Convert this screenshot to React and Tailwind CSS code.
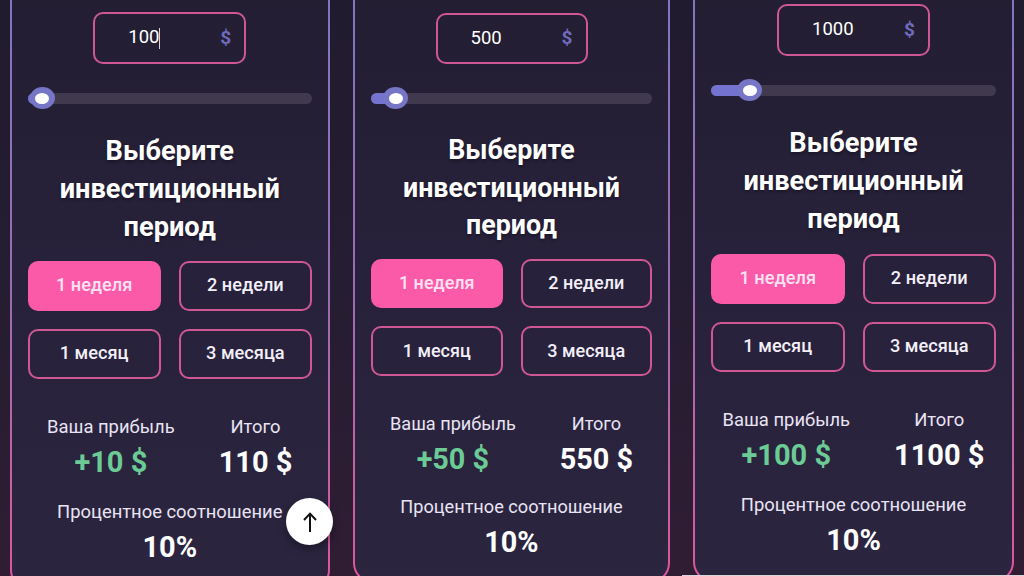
import React, { useState } from 'react';

const periods = ["1 неделя", "2 недели", "1 месяц", "3 месяца"];

const screens = [
  {
    id: 1,
    amount: "100",
    profit: "+10 $",
    total: "110 $",
    percent: "10%",
    focused: true,
    scrollTop: true,
    column: "w-[342px] pl-[10px] pr-[12px]",
    card: "h-[588px] pt-[12px] pl-[15.5px] pr-[16px]",
    field: "w-[153px] h-[52px]",
    slider: "mt-[23px]",
    fill: "w-[15px]",
    thumb: "left-[2px]",
    title: "mt-[23px] text-[27.2px] leading-[38px]",
    grid: "mt-[15px] gap-[18px] auto-rows-[50px]",
    button: "text-[18.2px]",
    stats: "mt-[36px]",
    label: "text-[18.4px]",
    value: "text-[29px]",
    ratio: "mt-[21px]",
  },
  {
    id: 2,
    amount: "500",
    profit: "+50 $",
    total: "550 $",
    percent: "10%",
    column: "w-[341px] pl-[11px] pr-[13px]",
    card: "h-[581px] pt-[13px] px-[16px]",
    field: "w-[152px] h-[51px]",
    slider: "mt-[23px]",
    fill: "w-[25px]",
    thumb: "left-[12px]",
    title: "mt-[23px] text-[26.8px] leading-[37.6px]",
    grid: "mt-[14px] gap-[18px] auto-rows-[49.5px]",
    button: "text-[18px]",
    stats: "mt-[36px]",
    label: "text-[18.15px]",
    value: "text-[28.8px]",
    ratio: "mt-[19px]",
  },
  {
    id: 3,
    amount: "1000",
    profit: "+100 $",
    total: "1100 $",
    percent: "10%",
    column: "w-[341px] pl-[10px] pr-[10px]",
    card: "h-[580px] pt-[4px] px-[16px]",
    field: "w-[153px] h-[52px]",
    slider: "mt-[23px]",
    fill: "w-[39px]",
    thumb: "left-[26px]",
    title: "mt-[23px] text-[27.2px] leading-[38px]",
    grid: "mt-[16px] gap-[18px] auto-rows-[50px]",
    button: "text-[18.2px]",
    stats: "mt-[36px]",
    label: "text-[18.4px]",
    value: "text-[29px]",
    ratio: "mt-[21px]",
  },
];

const Slider = ({ screen }) => (
  <div className={`relative flex h-[22px] items-center ${screen.slider}`}>
    <div className="h-[11px] flex-1 overflow-hidden rounded-full bg-[#413a4f]">
      <div className={`h-full bg-[#7473cf] ${screen.fill}`} />
    </div>
    <div className={`absolute top-0 flex h-[22px] w-[25px] items-center justify-center rounded-[50%] bg-[#7775c6] ${screen.thumb}`}>
      <div className="h-[11px] w-[14px] rounded-[50%] bg-white" />
    </div>
  </div>
);

const Stat = ({ label, value, screen, color = "text-white" }) => (
  <div className="flex flex-col items-center whitespace-nowrap">
    <span className={`leading-[24px] text-[#e9e4f4] ${screen.label}`}>{label}</span>
    <span className={`mt-[6px] font-bold leading-[34px] ${screen.value} ${color}`}>{value}</span>
  </div>
);

const Calculator = ({ screen }) => {
  const [period, setPeriod] = useState(periods[0]);

  return (
    <div className={`relative shrink-0 ${screen.column}`}>
      {/* Gradient frame */}
      <div className="rounded-b-[20px] bg-linear-to-b from-[#7f77bf] via-[#9b6bb2] to-[#df559b] px-[2px] pb-[2px]">
        <div className={`rounded-b-[18px] bg-linear-to-b from-[#231e32] via-[#28213c] to-[#2b2540] ${screen.card}`}>
          {/* Amount */}
          <div className={`mx-auto flex items-center justify-between rounded-[10px] border-2 border-[#cf5795] pl-[33px] pr-[13px] text-[18.5px] ${screen.field}`}>
            <span className="flex items-center text-white">
              {screen.amount}
              {screen.focused && <span className="h-[21px] w-px bg-[#d8d5e0]" />}
            </span>
            <span className="text-[19px] font-bold text-[#706bbd]">$</span>
          </div>

          <Slider screen={screen} />

          <h2 className={`text-center font-bold text-white [text-shadow:0_2px_3px_rgb(0_0_0/0.3)] ${screen.title}`}>
            Выберите<br />инвестиционный<br />период
          </h2>

          {/* Period */}
          <div className={`grid grid-cols-2 ${screen.grid}`}>
            {periods.map(item => (
              <button
                key={item}
                onClick={() => setPeriod(item)}
                className={`rounded-[10px] border-2 pb-[2px] font-medium ${screen.button} ${
                  item === period
                    ? "border-[#fb5aa8] bg-[#fb5aa8] text-[#ffe3f3]"
                    : "border-[#cf5795] text-[#f3eff9]"
                }`}
              >
                {item}
              </button>
            ))}
          </div>

          {/* Results */}
          <div className={`flex justify-center gap-[44px] ${screen.stats}`}>
            <Stat label="Ваша прибыль" value={screen.profit} screen={screen} color="text-[#6ccb95]" />
            <Stat label="Итого" value={screen.total} screen={screen} />
          </div>
          <div className={screen.ratio}>
            <Stat label="Процентное соотношение" value={screen.percent} screen={screen} />
          </div>
        </div>
      </div>

      {screen.scrollTop && (
        <button className="absolute left-[286px] top-[498px] flex h-[47px] w-[47px] items-center justify-center rounded-full bg-white shadow-[0_4px_10px_rgb(0_0_0/0.35)]">
          <svg width="14" height="20" viewBox="0 0 14 20" fill="none" stroke="#111" strokeWidth="2">
            <path d="M7 20V2M1 8L7 1.6L13 8" />
          </svg>
        </button>
      )}
    </div>
  );
};

const App = () => {
  return (
    <div className="relative flex h-[576px] w-[1024px] items-start overflow-hidden bg-linear-to-b from-[#211b2f] via-[#251d31] to-[#301d34] font-['Roboto',sans-serif]">
      {screens.map(screen => (
        <Calculator key={screen.id} screen={screen} />
      ))}
      <div className="absolute bottom-0 right-0 h-px w-[342px] bg-[#d9d5dc]" />
    </div>
  );
};

export default App;
